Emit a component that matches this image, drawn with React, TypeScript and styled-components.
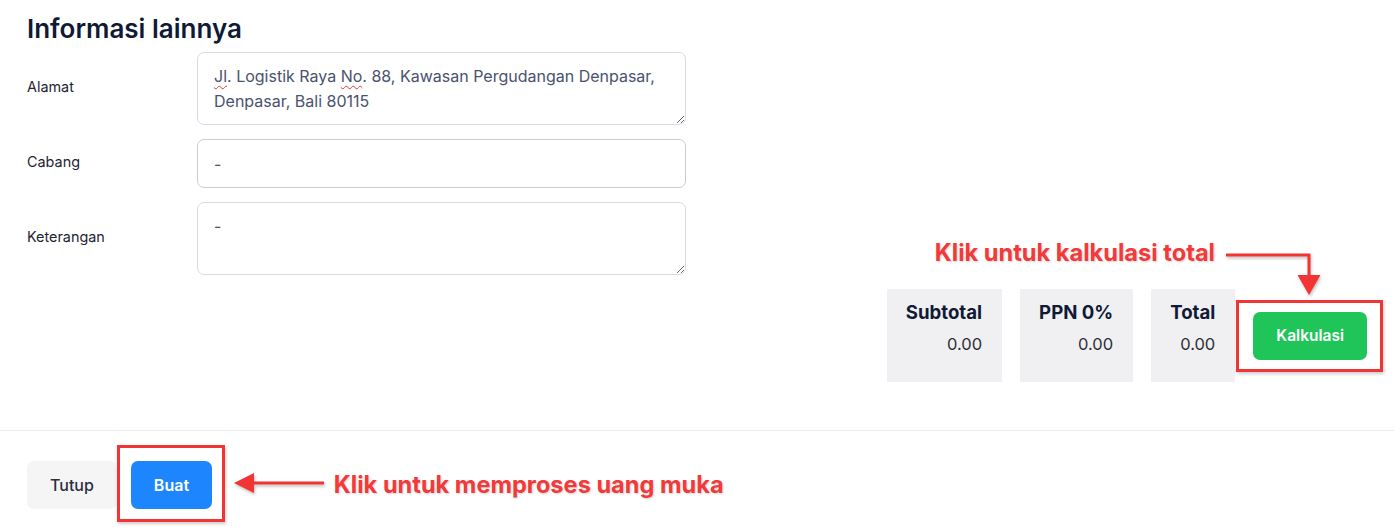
import React from "react";
import styled, { createGlobalStyle } from "styled-components";

const GlobalStyle = createGlobalStyle`
  html, body {
    margin: 0;
    padding: 0;
    background: #ffffff;
    font-family: Inter, "Noto Sans", sans-serif;
  }
`;

const Page = styled.div`
  width: 1394px;
  height: 527px;
  overflow: hidden;
  position: relative;
`;

const Body = styled.section`
  padding: 12px 27px 48px;
  border-bottom: 1px solid #ececf0;
`;

const Heading = styled.h2`
  margin: 0 0 7px;
  font-size: 26px;
  line-height: 33px;
  font-weight: 600;
  color: #0f1a36;
`;

const Form = styled.div`
  display: flex;
  flex-direction: column;
  gap: 14px;
  width: 659px;
`;

const Row = styled.div`
  display: grid;
  grid-template-columns: 170px 489px;
  align-items: center;
`;

const Label = styled.label`
  font-size: 14.4px;
  line-height: 18px;
  margin-top: -3px;
  color: #1f2433;
`;

const Area = styled.div`
  box-sizing: border-box;
  height: 73px;
  padding: 11px 16px;
  border: 1px solid #d8dbe6;
  border-radius: 7px;
  font-size: 16px;
  line-height: 25px;
  color: #4a526d;
  overflow: auto;
  resize: vertical;
`;

const Input = styled.div`
  box-sizing: border-box;
  height: 49px;
  padding: 0 16px;
  display: flex;
  align-items: center;
  border: 1px solid #c9ccd8;
  border-radius: 7px;
  font-size: 16px;
  color: #4a526d;
`;

const Typo = styled.span`
  text-decoration: underline wavy #e0352f;
  text-decoration-thickness: 1px;
  text-underline-offset: 3px;
`;

const Summary = styled.div`
  margin-top: 14px;
  display: flex;
  justify-content: flex-end;
  align-items: center;
  gap: 18px;
`;

const Cell = styled.div`
  box-sizing: border-box;
  height: 93px;
  padding: 10px 20px 0 19px;
  background: #f0f0f3;
  text-align: right;
`;

const CellTitle = styled.div`
  font-size: 18.6px;
  line-height: 26px;
  font-weight: 700;
  color: #101a36;
`;

const CellValue = styled.div`
  margin-top: 7px;
  font-size: 16.5px;
  line-height: 24px;
  color: #2f2f33;
`;

const Button = styled.button<{ $tone: "green" | "blue" | "light" }>`
  box-sizing: border-box;
  height: 48px;
  padding: 0 23px;
  border: none;
  border-radius: 7px;
  font-family: inherit;
  font-size: ${(p) => (p.$tone === "green" ? "15.5px" : "16px")};
  font-weight: ${(p) => (p.$tone === "light" ? 500 : 600)};
  cursor: pointer;
  color: ${(p) => (p.$tone === "light" ? "#2b3040" : "#ffffff")};
  background: ${(p) =>
    p.$tone === "green" ? "#1fc558" : p.$tone === "blue" ? "#1d86ff" : "#f5f5f6"};
`;

const Footer = styled.footer`
  padding: 30px 27px 18px;
  display: flex;
  gap: 14px;
`;

const Highlight = styled.div`
  position: relative;
  display: inline-flex;
`;

const Frame = styled.span<{ $t: number; $r: number; $b: number; $l: number }>`
  position: absolute;
  top: ${(p) => -p.$t}px;
  right: ${(p) => -p.$r}px;
  bottom: ${(p) => -p.$b}px;
  left: ${(p) => -p.$l}px;
  border: 3px solid #f33434;
  box-shadow: 1px 2px 3px rgba(0, 0, 0, 0.2);
  pointer-events: none;
  z-index: 2;
`;

const Note = styled.span<{ $top: number; $left?: number; $right?: number }>`
  position: absolute;
  top: ${(p) => p.$top}px;
  ${(p) => (p.$left !== undefined ? `left: ${p.$left}px;` : "")}
  ${(p) => (p.$right !== undefined ? `right: ${p.$right}px;` : "")}
  white-space: nowrap;
  font-size: 23.6px;
  line-height: 28px;
  font-weight: 700;
  color: #f23a3a;
  text-shadow: 1px 1px 2px rgba(0, 0, 0, 0.18);
  z-index: 2;
`;

const Arrow = styled.svg<{ $top: number; $left: number }>`
  position: absolute;
  top: ${(p) => p.$top}px;
  left: ${(p) => p.$left}px;
  overflow: visible;
  filter: drop-shadow(1px 2px 1.5px rgba(0, 0, 0, 0.25));
  z-index: 2;
`;

export default function App() {
  return (
    <Page>
      <GlobalStyle />
      <Body>
        <Heading>Informasi lainnya</Heading>
        <Form>
          <Row>
            <Label>Alamat</Label>
            <Area>
              <Typo>Jl</Typo>. Logistik Raya <Typo>No</Typo>. 88, Kawasan Pergudangan Denpasar,
              Denpasar, Bali 80115
            </Area>
          </Row>
          <Row>
            <Label>Cabang</Label>
            <Input>-</Input>
          </Row>
          <Row>
            <Label>Keterangan</Label>
            <Area>-</Area>
          </Row>
        </Form>
        <Summary>
          <Cell>
            <CellTitle>Subtotal</CellTitle>
            <CellValue>0.00</CellValue>
          </Cell>
          <Cell>
            <CellTitle>PPN 0%</CellTitle>
            <CellValue>0.00</CellValue>
          </Cell>
          <Cell>
            <CellTitle>Total</CellTitle>
            <CellValue>0.00</CellValue>
          </Cell>
          <Highlight>
            <Button $tone="green">Kalkulasi</Button>
            <Frame $t={12} $r={16} $b={12} $l={17} />
            <Note $top={-73} $right={152}>Klik untuk kalkulasi total</Note>
            <Arrow $top={-64} $left={-30} width="98" height="50" viewBox="0 0 98 50">
              <path d="M3 7 H86 V30" fill="none" stroke="#f33434" strokeWidth="3" />
              <polygon points="74.5,27 97.5,27 86,47" fill="#f33434" />
            </Arrow>
          </Highlight>
        </Summary>
      </Body>
      <Footer>
        <Button $tone="light">Tutup</Button>
        <Highlight>
          <Button $tone="blue">Buat</Button>
          <Frame $t={16} $r={13} $b={13} $l={14} />
          <Arrow $top={10} $left={101} width="95" height="24" viewBox="0 0 95 24">
            <polygon points="2,12 22,2 22,22" fill="#f33434" />
            <path d="M20 12 H92" fill="none" stroke="#f33434" strokeWidth="3" />
          </Arrow>
          <Note $top={10} $left={203}>Klik untuk memproses uang muka</Note>
        </Highlight>
      </Footer>
    </Page>
  );
}
